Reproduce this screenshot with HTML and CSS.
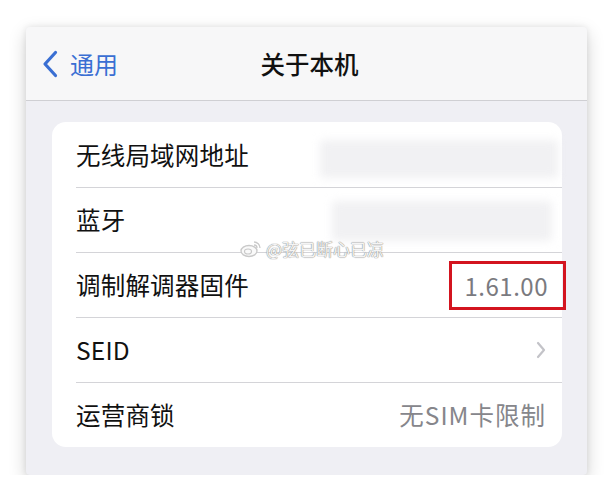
FILE: index.html
```html
<!DOCTYPE html>
<html lang="zh-CN">
<head>
<meta charset="utf-8">
<link rel="stylesheet" href="styles.css">
</head>
<body>
<div class="screen">
  <header class="nav">
    <div class="back">
      <svg class="back-icon" width="18" height="28" viewBox="0 0 18 28"><path d="M14.5 2.5 L4 14 L14.5 25.5" fill="none" stroke="#3a6fd3" stroke-width="3.2" stroke-linecap="round" stroke-linejoin="round"/></svg>
      <span>通用</span>
    </div>
    <div class="title">关于本机</div>
  </header>
  <main class="content">
    <section class="group">
      <div class="row"><span class="label">无线局域网地址</span><span class="blur blur-1"></span></div>
      <div class="row"><span class="label">蓝牙</span><span class="blur blur-2"></span></div>
      <div class="row"><span class="label">调制解调器固件</span><span class="value highlight">1.61.00</span></div>
      <div class="row"><span class="label">SEID</span>
        <svg class="chev" width="12" height="20" viewBox="0 0 12 20"><path d="M3 3 L9 10 L3 17" fill="none" stroke="#c3c3c8" stroke-width="2.2" stroke-linecap="round" stroke-linejoin="round"/></svg>
      </div>
      <div class="row"><span class="label">运营商锁</span><span class="value sim">无SIM卡限制</span></div>
    </section>
  </main>
  <div class="watermark"><svg width="22" height="18" viewBox="0 0 22 18"><ellipse cx="9" cy="11" rx="8" ry="5.5" fill="#fafafa" stroke="#c9c9c9" stroke-width="1.3"/><ellipse cx="8" cy="11.5" rx="3.5" ry="2.5" fill="none" stroke="#c9c9c9" stroke-width="1.2"/><path d="M14 2 a6 6 0 0 1 6 6 M14 5 a3 3 0 0 1 3 3" fill="none" stroke="#c9c9c9" stroke-width="1.3"/></svg><span>@弦已断心已凉</span></div>
</div>
</body>
</html>
```
FILE: styles.css
```css
* { box-sizing: border-box; }
html, body { margin: 0; padding: 0; background: #ffffff; }
body {
  font-family: "Noto Sans CJK SC", "Noto Sans", sans-serif;
  padding: 27px 26px 0 26px;
}
.screen {
  position: relative;
  width: 561px;
  height: 448px;
  background: #efeff4;
  border-radius: 4px;
  box-shadow: 0 6px 18px rgba(0,0,0,0.18), 0 0 6px rgba(0,0,0,0.08);
  display: flex;
  flex-direction: column;
}
.nav {
  position: relative;
  height: 74px;
  background: #f7f7f8;
  border-bottom: 1px solid #cfcfd3;
  border-radius: 4px 4px 0 0;
  display: flex;
  align-items: center;
  justify-content: center;
}
.back {
  position: absolute;
  left: 15px;
  top: 0;
  height: 100%;
  display: flex;
  align-items: center;
  gap: 11px;
  color: #3a6fd3;
  font-size: 24px;
}
.title {
  font-size: 24.5px;
  font-weight: 500;
  color: #111;
  margin-left: 6px;
}
.content {
  padding: 21px 25px 0 26px;
}
.group {
  position: relative;
  background: #ffffff;
  border-radius: 14px;
}
.row {
  position: relative;
  height: 65px;
  display: flex;
  align-items: center;
  justify-content: space-between;
  padding: 0 15px 0 24px;
  font-size: 24.5px;
  color: #111;
}
.row + .row::before {
  content: "";
  position: absolute;
  left: 24px;
  right: 0;
  top: 0;
  border-top: 1px solid #d4d4d8;
}
.label { letter-spacing: 0.2px; }
.value { color: #86868b; }
.sim { letter-spacing: 1px; margin-right: 1px; }
.highlight {
  position: absolute;
  right: -4px;
  top: 9px;
  width: 117px;
  height: 49px;
  border: 3px solid #d3141f;
  display: flex;
  align-items: center;
  justify-content: flex-end;
  padding-right: 15px;
  font-size: 24px;
  letter-spacing: 0.5px;
  color: #7a7a7f;
}
.blur {
  position: absolute;
  background: #f1f1f3;
  filter: blur(4px);
  border-radius: 4px;
}
.blur-1 { left: 268px; right: 4px; top: 18px; height: 38px; }
.blur-2 { left: 280px; right: 10px; top: 14px; height: 40px; }
.chev { margin-right: 0; }
.watermark {
  position: absolute;
  left: 214px;
  top: 209px;
  display: flex;
  align-items: center;
  gap: 4px;
  font-size: 17px;
  color: #f4f4f4;
  text-shadow: 0 0 1px #8a8a8a, 0 0 1px #8a8a8a;
}
```
